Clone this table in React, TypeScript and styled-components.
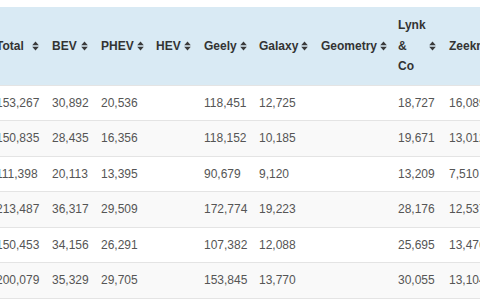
import React, { useLayoutEffect, useRef } from "react";
import styled, { createGlobalStyle } from "styled-components";

type Column = { key: string; label: string; width: number };

const columns: Column[] = [
  { key: "month", label: "Month", width: 100 },
  { key: "total", label: "Total", width: 56 },
  { key: "bev", label: "BEV", width: 49 },
  { key: "phev", label: "PHEV", width: 55 },
  { key: "hev", label: "HEV", width: 48 },
  { key: "geely", label: "Geely", width: 55 },
  { key: "galaxy", label: "Galaxy", width: 62 },
  { key: "geometry", label: "Geometry", width: 77 },
  { key: "lynk", label: "Lynk & Co", width: 51 },
  { key: "zeekr", label: "Zeekr", width: 60 },
  { key: "smart", label: "Smart", width: 60 },
];

const rows: Record<string, string>[] = [
  { month: "2024-01", total: "153,267", bev: "30,892", phev: "20,536", hev: "", geely: "118,451", galaxy: "12,725", geometry: "", lynk: "18,727", zeekr: "16,089", smart: "" },
  { month: "2024-02", total: "150,835", bev: "28,435", phev: "16,356", hev: "", geely: "118,152", galaxy: "10,185", geometry: "", lynk: "19,671", zeekr: "13,012", smart: "" },
  { month: "2024-03", total: "111,398", bev: "20,113", phev: "13,395", hev: "", geely: "90,679", galaxy: "9,120", geometry: "", lynk: "13,209", zeekr: "7,510", smart: "" },
  { month: "2024-04", total: "213,487", bev: "36,317", phev: "29,509", hev: "", geely: "172,774", galaxy: "19,223", geometry: "", lynk: "28,176", zeekr: "12,537", smart: "" },
  { month: "2024-05", total: "150,453", bev: "34,156", phev: "26,291", hev: "", geely: "107,382", galaxy: "12,088", geometry: "", lynk: "25,695", zeekr: "13,476", smart: "" },
  { month: "2024-06", total: "200,079", bev: "35,329", phev: "29,705", hev: "", geely: "153,845", galaxy: "13,770", geometry: "", lynk: "30,055", zeekr: "13,104", smart: "" },
];

// table is scrolled so the Total column sits just past the left edge
const SCROLL_LEFT = 112;

const SortIcon = () => (
  <svg width="7" height="10" viewBox="0 0 7 10">
    <path d="M3.5 0.5 L6.8 4.2 L0.2 4.2 Z" fill="#3a3a3a" />
    <path d="M3.5 9.5 L6.8 5.8 L0.2 5.8 Z" fill="#3a3a3a" />
  </svg>
);

const App = () => {
  const scrollRef = useRef<HTMLDivElement>(null);

  useLayoutEffect(() => {
    if (scrollRef.current) scrollRef.current.scrollLeft = SCROLL_LEFT;
  }, []);

  return (
    <>
      <GlobalStyle />
      <Page>
        <ScrollBox ref={scrollRef}>
          <Table>
            <colgroup>
              {columns.map((col) => (
                <col key={col.key} style={{ width: col.width }} />
              ))}
            </colgroup>
            <thead>
              <tr>
                {columns.map((col) => (
                  <HeadCell key={col.key}>
                    <HeadInner>
                      <HeadLabel>{col.label}</HeadLabel>
                      <SortIcon />
                    </HeadInner>
                  </HeadCell>
                ))}
              </tr>
            </thead>
            <tbody>
              {rows.map((row, i) => (
                <BodyRow key={row.month} $striped={i % 2 === 1}>
                  {columns.map((col) => (
                    <Cell key={col.key}>{row[col.key]}</Cell>
                  ))}
                </BodyRow>
              ))}
            </tbody>
          </Table>
        </ScrollBox>
      </Page>
    </>
  );
};

export default App;

const GlobalStyle = createGlobalStyle`
  html, body {
    margin: 0;
    padding: 0;
    background: #fff;
    font-family: "Liberation Sans", Arial, sans-serif;
  }
`;

const Page = styled.div`
  width: 480px;
  height: 300px;
  padding-top: 7px;
  box-sizing: border-box;
  overflow: hidden;
`;

const ScrollBox = styled.div`
  width: 100%;
  overflow: hidden;
`;

const Table = styled.table`
  border-collapse: collapse;
  table-layout: fixed;
  width: ${columns.reduce((sum, c) => sum + c.width, 0)}px;
  font-size: 12px;
`;

const HeadCell = styled.th`
  background: #d9eaf4;
  color: #333;
  font-weight: bold;
  text-align: left;
  vertical-align: middle;
  line-height: 20.5px;
  padding: 8px 5px 8px 8px;
`;

const HeadInner = styled.div`
  display: flex;
  align-items: center;
  justify-content: space-between;
  gap: 3px;

  svg {
    flex-shrink: 0;
  }
`;

const HeadLabel = styled.span`
  width: min-content;
`;

const BodyRow = styled.tr<{ $striped: boolean }>`
  background: ${({ $striped }) => ($striped ? "#f9f9f9" : "#fff")};
`;

const Cell = styled.td`
  color: #555;
  line-height: 18.5px;
  padding: 8px;
  border-top: 1px solid #e4e4e4;
  border-bottom: 1px solid #e4e4e4;
  white-space: nowrap;
`;
